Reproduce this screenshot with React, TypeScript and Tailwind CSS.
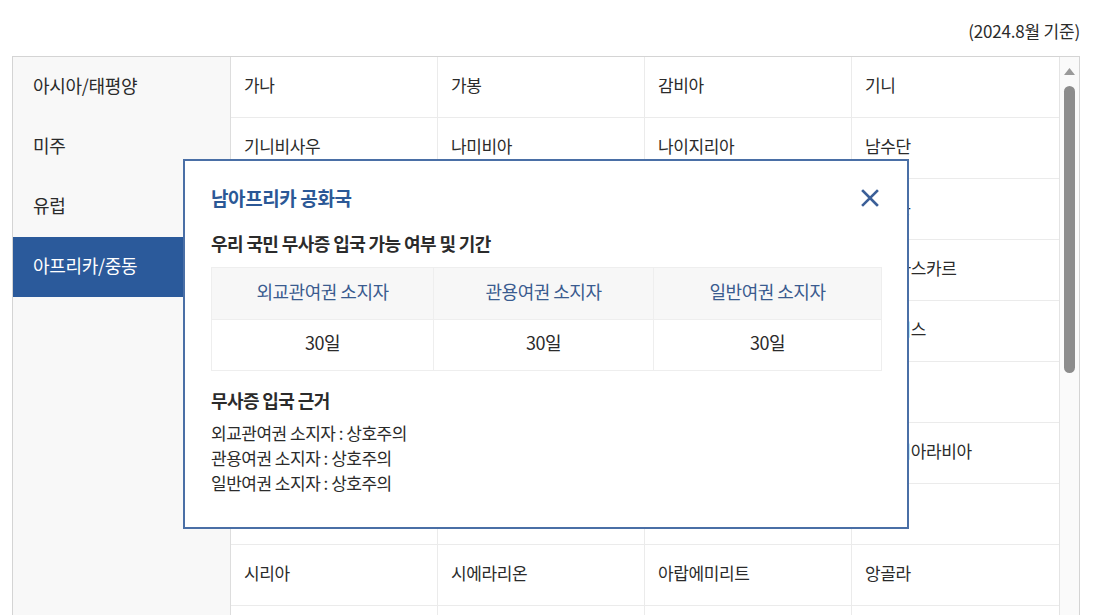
const regions = ["아시아/태평양", "미주", "유럽", "아프리카/중동"];

const countries = [
  ["가나", "가봉", "감비아", "기니"],
  ["기니비사우", "나미비아", "나이지리아", "남수단"],
  ["남아프리카공화국", "니제르", "라이베리아", "레바논"],
  ["레소토", "르완다", "리비아", "마다가스카르"],
  ["말라위", "말리", "모로코", "모리셔스"],
  ["모리타니아", "모잠비크", "바레인", "베냉"],
  ["보츠와나", "부룬디", "부르키나파소", "사우디아라비아"],
  ["세네갈", "세이셸", "소말리아", "수단"],
  ["시리아", "시에라리온", "아랍에미리트", "앙골라"],
  // next row sits below the fold
  ["", "", "", ""],
];

const passports = ["외교관여권 소지자", "관용여권 소지자", "일반여권 소지자"];

function VisaModal() {
  return (
    <div className="absolute left-[170px] top-[102px] w-[726px] h-[370px] border-2 border-[#4a6fa6] bg-white px-[26px] pt-[24px]">
      <div className="flex items-center justify-between">
        <h3 className="text-[19px] leading-[26px] font-bold tracking-[-0.4px] text-[#2b5896]">
          남아프리카 공화국
        </h3>
        <button className="mr-[2px] text-[#3b5f98]">
          <svg width="18" height="18" viewBox="0 0 18 18">
            <path
              d="M2 2 L16 16 M16 2 L2 16"
              stroke="currentColor"
              strokeWidth="2.6"
              strokeLinecap="square"
            />
          </svg>
        </button>
      </div>

      <h4 className="mt-[20px] text-[18px] leading-[24px] font-bold tracking-[-0.6px] text-[#2b2b2b]">
        우리 국민 무사증 입국 가능 여부 및 기간
      </h4>
      <div className="mt-[12px] w-[671px] border border-[#eeeeee]">
        <div className="grid grid-cols-[222px_220px_1fr] bg-[#f7f7f7] border-b border-[#eeeeee]">
          {passports.map((p, i) => (
            <div
              key={p}
              className={
                "h-[51px] pb-[4px] flex items-center justify-center text-[18px] tracking-[-0.5px] text-[#3a5b8f]" +
                (i < 2 ? " border-r border-[#eeeeee]" : "")
              }
            >
              {p}
            </div>
          ))}
        </div>
        <div className="grid grid-cols-[222px_220px_1fr]">
          {passports.map((p, i) => (
            <div
              key={p}
              className={
                "h-[50px] pb-[6px] flex items-center justify-center text-[18px] tracking-[-0.5px] text-[#2b2b2b]" +
                (i < 2 ? " border-r border-[#eeeeee]" : "")
              }
            >
              30일
            </div>
          ))}
        </div>
      </div>

      <h4 className="mt-[17px] text-[18px] leading-[24px] font-bold tracking-[-0.6px] text-[#2b2b2b]">
        무사증 입국 근거
      </h4>
      <ul className="mt-[8px] text-[17px] leading-[25px] tracking-[-0.5px] text-[#2b2b2b]">
        {passports.map((p) => (
          <li key={p}>{p} : 상호주의</li>
        ))}
      </ul>
    </div>
  );
}

export default function App() {
  return (
    <div className="h-[615px] overflow-hidden bg-white pl-[12px] pr-[27px] font-['Noto_Sans_CJK_KR',sans-serif] text-[#2b2b2b]">
      <div className="h-[56px] pt-[19px] text-right text-[17px] leading-[24px] tracking-[-0.2px]">
        (2024.8월 기준)
      </div>

      <div className="relative flex border border-[#d4d4d4]">
        <ul className="w-[218px] shrink-0 bg-[#f8f8f8] border-r border-[#dddddd]">
          {regions.map((r) => (
            <li
              key={r}
              className={
                r === "아프리카/중동"
                  ? "h-[60px] pb-[4px] flex items-center pl-[20px] text-[18px] tracking-[-0.3px] bg-[#2b5a9b] text-white"
                  : "h-[60px] pb-[4px] flex items-center pl-[20px] text-[18px] tracking-[-0.3px] text-[#2b2b2b]"
              }
            >
              {r}
            </li>
          ))}
        </ul>

        <div className="flex-1 grid grid-cols-4">
          {countries.flat().map((c, i) => (
            <div
              key={i}
              className={
                "h-[61px] pb-[4px] flex items-center pl-[13px] border-b border-[#ebebeb] text-[17px] tracking-[-0.4px] text-[#2b2b2b]" +
                (i % 4 < 3 ? " border-r" : "")
              }
            >
              {c}
            </div>
          ))}
        </div>

        <div className="w-[20px] shrink-0 border-l border-[#e4e4e4] bg-[#fafafa] flex flex-col items-center">
          <svg className="mt-[11px]" width="11" height="7" viewBox="0 0 11 7">
            <path d="M5.5 0 L11 7 L0 7 Z" fill="#9a9a9a" />
          </svg>
          <div className="mt-[11px] w-[11px] h-[287px] rounded-full bg-[#8c8c8c]" />
        </div>

        <VisaModal />
      </div>
    </div>
  );
}
